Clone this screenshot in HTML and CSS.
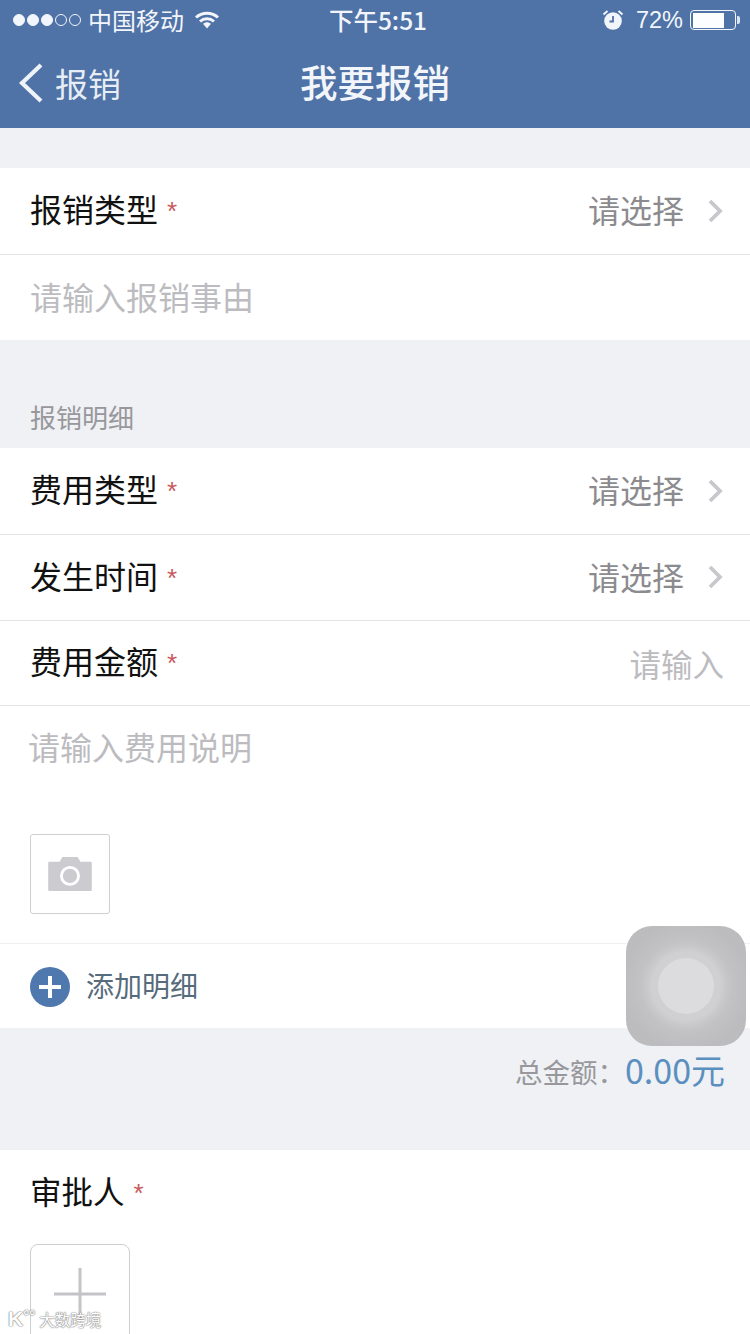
FILE: index.html
```html
<!DOCTYPE html>
<html lang="zh">
<head>
<meta charset="utf-8">
<title>我要报销</title>
<link rel="stylesheet" href="styles.css">
</head>
<body>
<div class="page">
  <header class="header">
    <div class="status">
      <div class="status-left">
        <span class="signal"><i class="on"></i><i class="on"></i><i class="on"></i><i></i><i></i></span>
        <span class="carrier">中国移动</span>
        <svg class="wifi" width="24" height="18" viewBox="0 0 24 18"><path d="M1 6.500C7 .8 17 .8 23 6.500" fill="none" stroke="#f2f6fa" stroke-width="3"/><path d="M5 10.500c4-3.600 10-3.600 14 0" fill="none" stroke="#f2f6fa" stroke-width="3"/><path d="M8 12.800c2.500-2.200 5.500-2.200 8 0l-4 4.700z" fill="#f2f6fa"/></svg>
      </div>
      <span class="clock">下午5:51</span>
      <div class="status-right">
        <svg class="alarm" width="22" height="22" viewBox="0 0 22 22"><circle cx="11" cy="12" r="8.800" fill="#f2f6fa"/><path d="M11 7v5.500H7.500" fill="none" stroke="#4f72a7" stroke-width="1.800"/><path d="M1.500 5.500 5.500 2M20.500 5.500 16.500 2" stroke="#f2f6fa" stroke-width="2" fill="none"/></svg>
        <span class="percent">72%</span>
        <span class="battery"><span class="battery-fill"></span></span>
        <span class="battery-tip"></span>
      </div>
    </div>
    <nav class="nav">
      <div class="back">
        <svg width="26" height="40" viewBox="0 0 26 40"><path d="M23 2 4 20l19 18" fill="none" stroke="#eef3f8" stroke-width="4.200"/></svg>
        <span>报销</span>
      </div>
      <h1 class="title">我要报销</h1>
    </nav>
  </header>

  <main>
    <section class="card first">
      <div class="row tall line">
        <span class="label">报销类型<em class="req">*</em></span>
        <span class="pick">请选择<svg class="chev" width="16" height="26" viewBox="0 0 16 26"><path d="m2 3 10 10L2 23" fill="none" stroke="#c8c8cc" stroke-width="3.800"/></svg></span>
      </div>
      <div class="row short"><span class="hint">请输入报销事由</span></div>
    </section>

    <h2 class="section-title">报销明细</h2>

    <section class="card">
      <div class="row tall line">
        <span class="label">费用类型<em class="req">*</em></span>
        <span class="pick">请选择<svg class="chev" width="16" height="26" viewBox="0 0 16 26"><path d="m2 3 10 10L2 23" fill="none" stroke="#c8c8cc" stroke-width="3.800"/></svg></span>
      </div>
      <div class="row line">
        <span class="label">发生时间<em class="req">*</em></span>
        <span class="pick">请选择<svg class="chev" width="16" height="26" viewBox="0 0 16 26"><path d="m2 3 10 10L2 23" fill="none" stroke="#c8c8cc" stroke-width="3.800"/></svg></span>
      </div>
      <div class="row line short">
        <span class="label">费用金额<em class="req">*</em></span>
        <span class="amount-hint">请输入</span>
      </div>
      <div class="desc line">
        <span class="hint">请输入费用说明</span>
        <div class="photo">
          <svg width="44" height="36" viewBox="0 0 46 38"><path d="M1 6h11l3-5h16l3 5h11q1 0 1 1v29q0 1-1 1H1q-1 0-1-1V7q0-1 1-1z" fill="#ccccd0"/><circle cx="23" cy="21" r="9" fill="#ccccd0" stroke="#fff" stroke-width="3"/></svg>
        </div>
      </div>
      <div class="add">
        <span class="add-icon"><svg width="40" height="40" viewBox="0 0 40 40"><circle cx="20" cy="20" r="20" fill="#4f78ae"/><path d="M20 9v22M9 20h22" stroke="#fff" stroke-width="4"/></svg></span>
        <span class="add-text">添加明细</span>
      </div>
    </section>

    <div class="total">
      <span class="total-label">总金额：</span><span class="total-value">0.00元</span>
    </div>

    <section class="card approver">
      <div class="label">审批人<em class="req">*</em></div>
      <div class="add-box"><svg width="52" height="52" viewBox="0 0 52 52"><path d="M26 0v52M0 26h52" stroke="#c4c4c8" stroke-width="3"/></svg></div>
    </section>
  </main>

  <div class="assistive"><span class="knob"></span></div>
  <div class="watermark"><span class="wm-logo">K<sup class="wm-dots">°°</sup></span><span class="wm-text">大数跨境</span></div>
</div>
</body>
</html>
```
FILE: styles.css
```css
* { box-sizing: border-box; }
html, body { margin: 0; padding: 0; }
body {
  font-family: "Noto Sans CJK SC", "Liberation Sans", sans-serif;
  background: #eff1f4;
  color: #111;
}
.page {
  position: relative;
  width: 750px;
  height: 1334px;
  overflow: hidden;
  background: #eff1f4;
}

/* header */
.header {
  height: 128px;
  background: #4f72a7;
  color: #f2f6fa;
}
.status {
  height: 40px;
  position: relative;
  display: flex;
  align-items: center;
  justify-content: space-between;
  padding: 0 0 0 13px;
  font-size: 24px;
}
.status-left, .status-right { display: flex; align-items: center; }
.signal { display: flex; gap: 2px; margin-right: 7px; }
.signal i {
  width: 12px;
  height: 12px;
  border-radius: 50%;
  border: 1px solid #f2f6fa;
}
.signal i.on { background: #f2f6fa; }
.carrier { line-height: 40px; }
.wifi { margin-left: 11px; }
.clock {
  position: absolute;
  left: 6px;
  right: 0;
  text-align: center;
  font-size: 24.500px;
  font-weight: 500;
  line-height: 40px;
}
.status-right { padding-right: 10px; position: relative; }
.alarm { margin-right: 12px; }
.percent { font-family: "Liberation Sans", sans-serif; font-size: 23.500px; margin-right: 7px; }
.battery {
  width: 46px;
  height: 20px;
  border: 1.500px solid #f2f6fa;
  border-radius: 4px;
  padding: 1.500px;
  display: block;
}
.battery-fill { display: block; width: 76%; height: 100%; background: #fbfdff; }
.battery-tip { width: 3px; height: 8px; margin-left: 1px; background: #dce6f0; border-radius: 0 2px 2px 0; }

.nav {
  height: 88px;
  position: relative;
  display: flex;
  align-items: center;
  justify-content: center;
}
.back {
  position: absolute;
  left: 18px;
  top: 5px;
  height: 76px;
  display: flex;
  align-items: center;
  gap: 11px;
  font-size: 33px;
  color: #e6edf4;
}
.title {
  margin: 0 0 7px;
  font-size: 37.500px;
  font-weight: 500;
  line-height: 1.2;
}

/* rows */
.card { background: #fff; }
.first { margin-top: 40px; }
.row {
  height: 86px;
  display: flex;
  align-items: center;
  justify-content: space-between;
  padding: 0 26px 0 30px;
}
.row.tall { height: 87px; }
.row.short { height: 85px; }
.line { border-bottom: 1px solid #e4e4e7; }
.label { font-size: 32px; color: #111; line-height: 44px; }
.row .label { margin-bottom: 3px; }
.req {
  font-style: normal;
  font-size: 26px;
  color: #c8585c;
  margin-left: 9px;
  font-family: "Liberation Sans", sans-serif;
  vertical-align: 2px;
}
.pick {
  display: flex;
  align-items: center;
  font-size: 32px;
  color: #8b8b8f;
  line-height: 44px;
}
.chev { margin-left: 24px; margin-top: 3px; }
.pick, .hint, .amount-hint { margin-bottom: 4px; }
.hint { font-size: 32px; color: #bcbcc0; }
.amount-hint { font-size: 31.500px; color: #bcbcc0; margin-bottom: 0; }
.section-title {
  margin: 0;
  height: 108px;
  padding: 59px 0 0 30px;
  font-size: 26px;
  line-height: 36px;
  font-weight: 400;
  color: #98989c;
}
.desc {
  height: 238px;
  padding: 17px 0 0 28px;
  border-bottom-color: #f0f0f2;
}
.desc .hint { display: block; line-height: 46px; margin-bottom: 0; }
.photo {
  width: 80px;
  height: 80px;
  margin: 65px 0 0 2px;
  border: 1px solid #cfcfd3;
  border-radius: 3px;
  display: flex;
  align-items: center;
  justify-content: center;
}
.add {
  height: 84px;
  display: flex;
  align-items: center;
  padding-left: 30px;
}
.add-icon { display: flex; margin-top: 2px; }
.add-text { margin-left: 16px; font-size: 28px; color: #566b7c; margin-bottom: 2px; }
.total {
  height: 122px;
  display: flex;
  justify-content: flex-end;
  align-items: center;
  padding: 0 25px 36px 0;
}
.total-label { font-size: 27.500px; color: #98989c; }
.total-value { font-size: 34px; color: #5a8fc0; margin-bottom: 3px; }
.approver { height: 190px; padding: 18px 0 0 30px; }
.approver .label { display: block; font-size: 31.500px; }
.add-box {
  width: 100px;
  height: 100px;
  margin: 29px 0 0 0;
  border: 1px solid #cfcfd3;
  border-radius: 8px;
  display: flex;
  align-items: center;
  justify-content: center;
}

/* overlays */
.assistive {
  position: absolute;
  left: 626px;
  top: 926px;
  width: 120px;
  height: 120px;
  border-radius: 26px;
  background: radial-gradient(circle at center, #d0d0d3 0 34px, #c9c9cc 39px, #c2c2c5 46px, #bcbcbf 64px);
  display: flex;
  align-items: center;
  justify-content: center;
}
.knob {
  width: 56px;
  height: 56px;
  border-radius: 50%;
  background: #dcdcde;
}
.watermark {
  position: absolute;
  left: 8px;
  top: 1306px;
  display: flex;
  align-items: center;
  gap: 4px;
  line-height: 26px;
  color: #fff;
  text-shadow: 0 0 1px #888, 0 0 1px #888, 0 0 2px #999;
}
.wm-logo { font-family: "Liberation Sans", sans-serif; font-size: 21px; font-weight: 700; }
.wm-dots { font-size: 15px; line-height: 0; vertical-align: 5px; }
.wm-text { font-size: 15.500px; }
```
